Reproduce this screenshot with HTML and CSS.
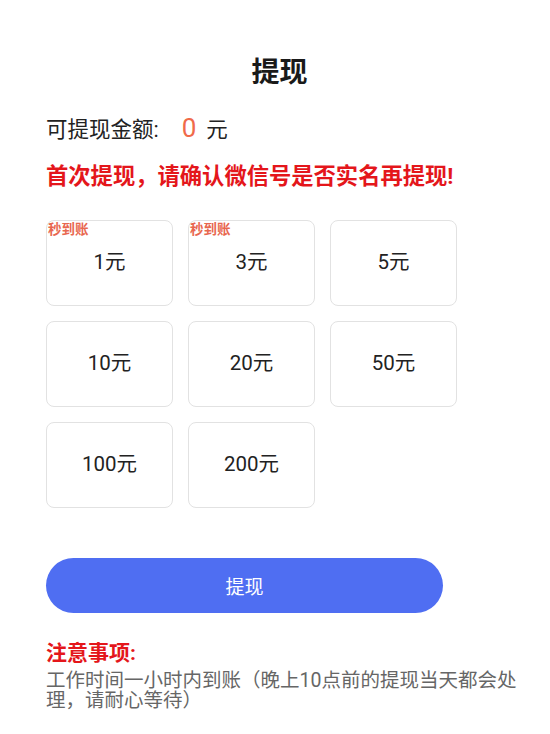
FILE: index.html
```html
<!DOCTYPE html>
<html lang="zh-CN">
<head>
<meta charset="utf-8">
<title>提现</title>
<link rel="stylesheet" href="styles.css">
</head>
<body>
<div class="page">
  <h1 class="title">提现</h1>
  <div class="content">
    <div class="balance">可提现金额:<span class="amount">0</span>元</div>
    <div class="warning">首次提现，请确认微信号是否实名再提现!</div>
    <div class="grid">
      <div class="option"><span class="tag">秒到账</span>1元</div>
      <div class="option"><span class="tag">秒到账</span>3元</div>
      <div class="option">5元</div>
      <div class="option">10元</div>
      <div class="option">20元</div>
      <div class="option">50元</div>
      <div class="option">100元</div>
      <div class="option">200元</div>
    </div>
    <button class="submit">提现</button>
    <div class="notes">
      <div class="notes-title">注意事项:</div>
      <div class="notes-text">工作时间一小时内到账（晚上10点前的提现当天都会处理，请耐心等待）</div>
    </div>
  </div>
</div>
</body>
</html>
```

FILE: styles.css
```css
html, body {
  margin: 0;
  padding: 0;
  background: #ffffff;
}

body {
  font-family: Roboto, "Noto Sans CJK SC", sans-serif;
  color: #222222;
}

.page {
  width: 550px;
}

.title {
  margin: 53px 0 0 0;
  padding-left: 9px;
  font-size: 28px;
  line-height: 40px;
  font-weight: 700;
  text-align: center;
  color: #1a1a1a;
}

.content {
  padding: 0 23px 0 46px;
}

.balance {
  margin-top: 20px;
  font-size: 21.5px;
  line-height: 30px;
  height: 30px;
  color: #222222;
  display: flex;
  align-items: baseline;
}

.amount {
  font-size: 26px;
  color: #f06a4a;
  margin-left: 23px;
  margin-right: 10px;
}

.warning {
  margin-top: 18px;
  font-size: 22.3px;
  line-height: 30px;
  font-weight: 700;
  color: #e4161b;
}

.grid {
  margin-top: 29px;
  display: grid;
  grid-template-columns: repeat(3, 127px);
  grid-auto-rows: 86px;
  column-gap: 15px;
  row-gap: 15px;
}

.option {
  position: relative;
  box-sizing: border-box;
  border: 1px solid #e2e2e2;
  border-radius: 8px;
  display: flex;
  align-items: center;
  justify-content: center;
  font-size: 20.5px;
  color: #222222;
  padding-bottom: 6px;
}

.tag {
  position: absolute;
  left: 1px;
  top: 0px;
  font-size: 13.5px;
  line-height: 17px;
  font-weight: 700;
  color: #e8674f;
}

.submit {
  display: block;
  margin-top: 50px;
  width: 397px;
  height: 55px;
  border: none;
  border-radius: 28px;
  background: #4f6ef2;
  color: #ffffff;
  font-family: inherit;
  font-size: 19px;
  padding: 0;
}

.notes {
  margin-top: 27px;
}

.notes-title {
  font-size: 21px;
  line-height: 26px;
  font-weight: 700;
  color: #e4161b;
}

.notes-text {
  margin-top: 5px;
  font-size: 19.5px;
  line-height: 20px;
  color: #666666;
}
```
